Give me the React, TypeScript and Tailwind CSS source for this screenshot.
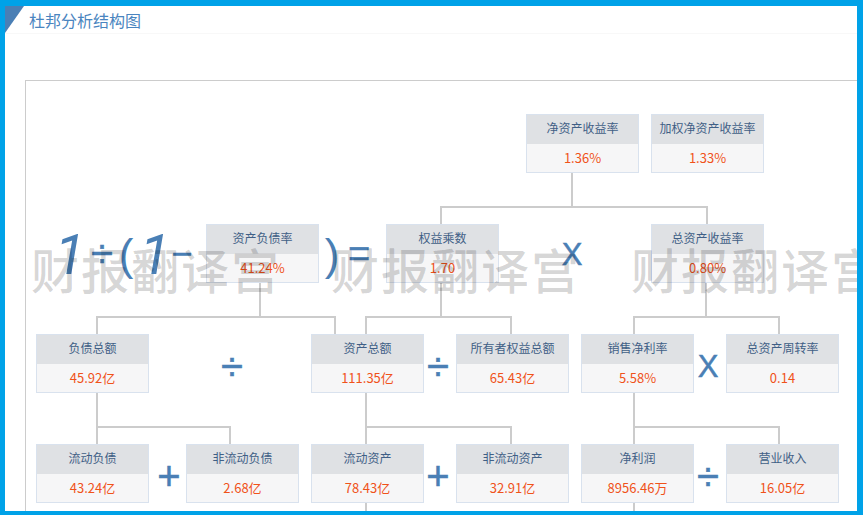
const boxes = [
  { x: 526, y: 114, label: '净资产收益率', value: '1.36%' },
  { x: 651, y: 114, label: '加权净资产收益率', value: '1.33%' },
  { x: 206, y: 224, label: '资产负债率', value: '41.24%' },
  { x: 386, y: 224, label: '权益乘数', value: '1.70' },
  { x: 651, y: 224, label: '总资产收益率', value: '0.80%' },
  { x: 36, y: 334, label: '负债总额', value: '45.92亿' },
  { x: 311, y: 334, label: '资产总额', value: '111.35亿' },
  { x: 456, y: 334, label: '所有者权益总额', value: '65.43亿' },
  { x: 581, y: 334, label: '销售净利率', value: '5.58%' },
  { x: 726, y: 334, label: '总资产周转率', value: '0.14' },
  { x: 36, y: 444, label: '流动负债', value: '43.24亿' },
  { x: 186, y: 444, label: '非流动负债', value: '2.68亿' },
  { x: 311, y: 444, label: '流动资产', value: '78.43亿' },
  { x: 456, y: 444, label: '非流动资产', value: '32.91亿' },
  { x: 581, y: 444, label: '净利润', value: '8956.46万' },
  { x: 726, y: 444, label: '营业收入', value: '16.05亿' },
];

// [left, top, width, height] in page coordinates
const lines = [
  [571, 173, 2, 34], [440, 206, 268, 2], [440, 206, 2, 18], [706, 206, 2, 18],
  [259, 283, 2, 34], [96, 316, 240, 2], [96, 316, 2, 18], [334, 316, 2, 18],
  [440, 283, 2, 34], [365, 316, 147, 2], [365, 316, 2, 18], [510, 316, 2, 18],
  [705, 283, 2, 34], [633, 316, 147, 2], [633, 316, 2, 18], [778, 316, 2, 18],
  [96, 393, 2, 51], [96, 426, 134, 2], [229, 426, 2, 18],
  [365, 393, 2, 51], [365, 426, 147, 2], [510, 426, 2, 18],
  [633, 393, 2, 51], [633, 426, 147, 2], [778, 426, 2, 18],
  [365, 503, 2, 12], [633, 503, 2, 12],
];

const ops = [
  { x: 70, y: 255, size: 56, text: '1', italic: true },
  { x: 102, y: 253, size: 40, text: '÷', heavy: true },
  { x: 126, y: 255, size: 44, text: '(' },
  { x: 155, y: 255, size: 56, text: '1', italic: true },
  { x: 182, y: 254, size: 36, text: '−', heavy: true },
  { x: 332, y: 255, size: 44, text: ')' },
  { x: 359, y: 254, size: 38, text: '=', heavy: true },
  { x: 572, y: 254, size: 31, text: 'X', heavy: true },
  { x: 232, y: 366, size: 40, text: '÷', heavy: true },
  { x: 438, y: 366, size: 40, text: '÷', heavy: true },
  { x: 708, y: 366, size: 31, text: 'X', heavy: true },
  { x: 169, y: 476, size: 40, text: '+', heavy: true },
  { x: 438, y: 476, size: 40, text: '+', heavy: true },
  { x: 708, y: 476, size: 40, text: '÷', heavy: true },
];

const font = { fontFamily: '"Noto Sans CJK SC", "Liberation Sans", sans-serif' };

export default function App() {
  return (
    <div
      className="relative h-[515px] w-[863px] overflow-hidden border-t-[6px] border-r-[6px] border-b-4 border-l-[5px] border-[#00a2e8] bg-white"
      style={font}
    >
      {/* title bar */}
      <div className="relative flex h-[28px] items-center border-b border-[#f8f8f8] pl-[24px] text-[16px] text-[#4a85c0]">
        <div className="absolute top-0 left-0 h-0 w-0 border-t-[27px] border-r-[19px] border-t-[#4a7fb5] border-r-transparent" />
        杜邦分析结构图
      </div>

      {/* chart panel, runs past the right edge */}
      <div className="mt-[46px] ml-[20px] h-[500px] w-[900px] border border-[#cccccc]" />

      {/* diagram canvas: origin moved back to the page corner */}
      <div className="absolute top-[-6px] left-[-5px] h-[515px] w-[863px]">
        {lines.map(([x, y, w, h], i) => (
          <div key={i} className="absolute bg-[#cccccc]" style={{ left: x, top: y, width: w, height: h }} />
        ))}
        {boxes.map((b) => (
          <div
            key={b.label}
            className="absolute flex h-[59px] w-[113px] flex-col border border-[#d9e2ee] text-center"
            style={{ left: b.x, top: b.y }}
          >
            <div className="flex h-[29px] items-center justify-center bg-[#dfe1e4] pb-[3px] text-[12px] text-[#3f5f86]">{b.label}</div>
            <div className="flex flex-1 items-center justify-center bg-[#f6f6f7] text-[13px] text-[#f0521a]">{b.value}</div>
          </div>
        ))}
        {ops.map((o, i) => (
          <span
            key={i}
            className={`absolute -translate-x-1/2 -translate-y-1/2 leading-none text-[#4a7fb5] ${o.italic ? 'italic' : ''} ${o.heavy ? '[-webkit-text-stroke:0.5px_#4a7fb5]' : ''}`}
            style={{ left: o.x, top: o.y, fontSize: o.size, fontFamily: o.italic ? 'Roboto, sans-serif' : '"Liberation Sans", sans-serif' }}
          >
            {o.text}
          </span>
        ))}
        {/* watermark */}
        {[31, 331, 631].map((x) => (
          <span
            key={x}
            className="pointer-events-none absolute top-[234px] text-[48px] leading-[68px] font-medium tracking-[2px] whitespace-nowrap text-black/[0.17]"
            style={{ left: x }}
          >
            财报翻译宫
          </span>
        ))}
      </div>
    </div>
  );
}
